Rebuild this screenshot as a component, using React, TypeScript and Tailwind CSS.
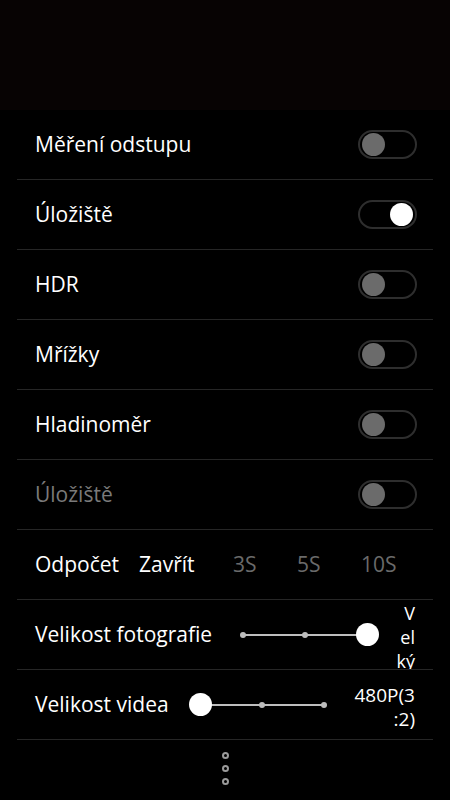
import React from "react";

type ToggleProps = { on?: boolean; disabled?: boolean };

function Toggle({ on }: ToggleProps) {
    return (
        <div className={`w-[59px] h-[29px] rounded-full border-2 border-[#2e2e2e] flex items-center px-[2px] ${on ? "justify-end" : "justify-start"}`}>
            <div className={`w-[23px] h-[23px] rounded-full ${on ? "bg-white" : "bg-[#6b6b6b]"}`} />
        </div>
    );
}

function Row({ children }: { children: React.ReactNode }) {
    return <div className="h-[70px] border-b border-[#262626] flex items-center pl-[18px] pr-[16px]">{children}</div>;
}

function ToggleRow({ label, on, disabled }: { label: string; on?: boolean; disabled?: boolean }) {
    return (
        <Row>
            <span className={`flex-1 text-[21px] ${disabled ? "text-[#7a7a7a]" : "text-white"}`}>{label}</span>
            <Toggle on={on} disabled={disabled} />
        </Row>
    );
}

function Slider({ pos }: { pos: number }) {
    const stops = [0, 1, 2];
    return (
        <div className="relative w-[124px] h-[24px]">
            <div className="absolute left-0 right-0 top-[11px] h-[2px] bg-[#bdbdbd]" />
            {stops.map((s) =>
                s === pos ? (
                    <div key={s} className="absolute top-0 w-[23px] h-[23px] -ml-[11px] rounded-full bg-white" style={{ left: s * 62 }} />
                ) : (
                    <div key={s} className="absolute top-[9px] w-[6px] h-[6px] -ml-[3px] rounded-full bg-[#bdbdbd]" style={{ left: s * 62 }} />
                )
            )}
        </div>
    );
}

export default function App() {
    return (
        <div className="w-[450px] h-[800px] bg-black flex flex-col font-['Open_Sans',sans-serif] overflow-hidden">
            <div className="h-[110px] bg-[#070303]" />
            <div className="px-[17px]">
                <ToggleRow label="Měření odstupu" />
                <ToggleRow label="Úložiště" on />
                <ToggleRow label="HDR" />
                <ToggleRow label="Mřížky" />
                <ToggleRow label="Hladinoměr" />
                <ToggleRow label="Úložiště" disabled />
                <Row>
                    <span className="text-white text-[21px] w-[104px]">Odpočet</span>
                    <span className="text-white text-[21px] w-[94px]">Zavřít</span>
                    <span className="text-[#6a6a6a] text-[21px] w-[64px]">3S</span>
                    <span className="text-[#6a6a6a] text-[21px] w-[64px]">5S</span>
                    <span className="text-[#6a6a6a] text-[21px]">10S</span>
                </Row>
                <div className="h-[70px] border-b border-[#262626] flex items-center pl-[18px] pr-[18px] overflow-hidden">
                    <span className="text-white text-[21px] w-[208px] shrink-0">Velikost fotografie</span>
                    <Slider pos={2} />
                    <div className="flex-1 self-start text-right text-white text-[18px] leading-[24px] pt-[1px]">
                        <div>V</div>
                        <div>el</div>
                        <div>ký</div>
                    </div>
                </div>
                <div className="h-[70px] border-b border-[#262626] flex items-center pl-[18px] pr-[18px]">
                    <span className="text-white text-[21px] w-[165px] shrink-0">Velikost videa</span>
                    <Slider pos={0} />
                    <div className="flex-1 text-right text-white text-[19px] leading-[24px] mt-[4px]">
                        <div>480P(3</div>
                        <div>:2)</div>
                    </div>
                </div>
            </div>
            <div className="flex-1 flex flex-col items-center pt-[12px] gap-[6px]">
                <div className="w-[7px] h-[7px] rounded-full border-2 border-[#9a9a9a]" />
                <div className="w-[7px] h-[7px] rounded-full border-2 border-[#9a9a9a]" />
                <div className="w-[7px] h-[7px] rounded-full border-2 border-[#9a9a9a]" />
            </div>
        </div>
    );
}
